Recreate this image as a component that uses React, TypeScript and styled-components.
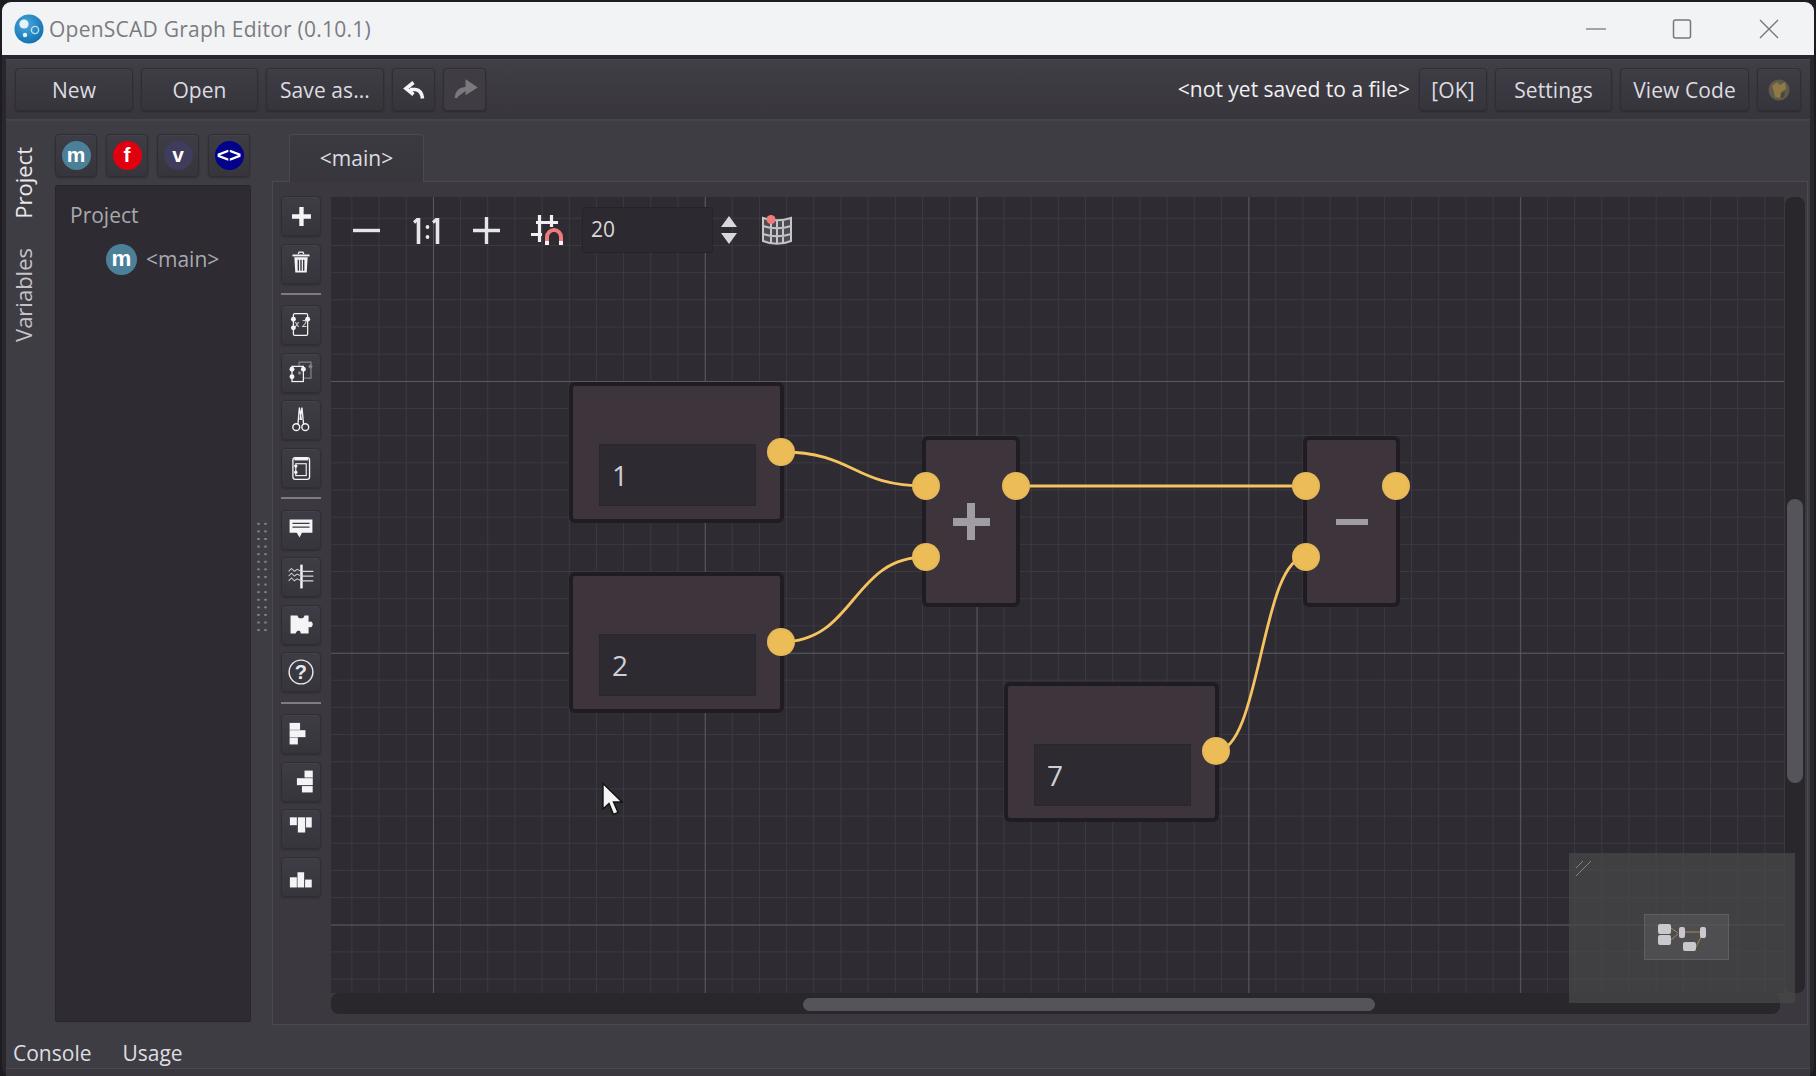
import React from "react";
import styled, { createGlobalStyle } from "styled-components";

const Global = createGlobalStyle`
  html, body { margin: 0; padding: 0; background: #1d1c20; overflow: hidden; }
  * { box-sizing: border-box; }
`;

const Root = styled.div`
  width: 1816px; height: 1076px; padding: 2px 2px 0 2px;
  display: flex; flex-direction: column;
  background: #1d1c20;
  font-family: "Open Sans", "Noto Sans", sans-serif;
  font-size: 21px; color: #e2e2e6; overflow: hidden;
`;
const TitleBar = styled.div`
  height: 53px; flex: none; display: flex; align-items: center;
  background: #f2f3f5; border-radius: 9px 9px 0 0; padding-left: 12px; color: #7b7b80;
`;
const TitleText = styled.span`
  margin-left: 5px; font-size: 21px; letter-spacing: 0.24px; flex: 1;
`;
const WinButtons = styled.div`
  display: flex; width: 262px; height: 100%; position: relative; justify-content: flex-end;
`;
const WinBtn = styled.div<{ $w: number }>`
  width: ${p => p.$w}px; height: 100%; display: flex; align-items: center; justify-content: center;
`;
const Frame = styled.div`
  flex: 1; min-height: 0; display: flex; flex-direction: column;
  background: #29272d; padding: 4px 4px 0 4px; border-radius: 0 0 9px 9px;
`;
const Toolbar = styled.div`
  height: 62px; flex: none; display: flex; align-items: flex-start; gap: 8px;
  padding: 8px 9px 0 9px; background: linear-gradient(#403e46, #38353c);
  border-bottom: 2px solid #45434b; border-top: 1px solid #4a4850;
`;
const Btn = styled.div<{ $w: number; $dim?: boolean }>`
  width: ${p => p.$w}px; height: 43px; flex: none;
  display: flex; align-items: center; justify-content: center;
  background: ${p => (p.$dim ? "#3f3d43" : "linear-gradient(#3e3c44, #37353c)")};
  border: 1px solid #302e35; border-radius: 4px;
  box-shadow: 0 1px 2px rgba(0,0,0,.25), inset 0 1px 0 rgba(255,255,255,.03);
  color: #dcdce0; white-space: nowrap; letter-spacing: 0.08px;
`;
const Spacer = styled.div`flex: 1;`;
const FileName = styled.div`
  height: 43px; line-height: 43px; color: #f0f0f2; margin-right: 1px; white-space: nowrap; letter-spacing: 0;
`;
const MainRow = styled.div`
  flex: none; height: 904px; display: flex; padding-top: 13px; background: #3f3d44;
`;
const VTabs = styled.div`
  width: 49px; flex: none; display: flex; flex-direction: column; align-items: flex-start; gap: 29px; padding: 13px 0 0 6px;
`;
const VTab = styled.div<{ $active?: boolean }>`
  writing-mode: vertical-rl; transform: rotate(180deg);
  color: ${p => (p.$active ? "#e8e8ea" : "#c4c4c8")}; font-size: 22px; line-height: 22px;
`;
const LeftCol = styled.div`
  width: 196px; flex: none; display: flex; flex-direction: column; gap: 8px; padding-bottom: 3px;
`;
const IconRow = styled.div`display: flex; gap: 9px;`;
const IconBtn = styled(Btn)`width: 42px;`;
const Bubble = styled.div<{ $bg: string; $size?: number }>`
  width: ${p => p.$size ?? 29}px; height: ${p => p.$size ?? 29}px; border-radius: 50%; background: ${p => p.$bg};
  display: flex; align-items: center; justify-content: center;
  color: #fff; font-family: "Liberation Sans", sans-serif; font-weight: 700; font-size: ${p => (p.$size ?? 29) * 0.72}px; line-height: 1;
`;
const ProjectPanel = styled.div`
  flex: 1; background: #2e2b33; border: 1px solid #28262c; border-radius: 2px; padding: 12px 0 0 14px; color: #a9a9ae;
`;
const PanelTitle = styled.div`line-height: 34px;`;
const TreeItem = styled.div`display: flex; align-items: center; gap: 9px; margin: 11px 0 0 36px; line-height: 32px;`;
const Splitter = styled.div`
  width: 21px; flex: none; position: relative;
`;
const Grip = styled.div`
  position: absolute; left: 4px; top: 386px; width: 14px; height: 116px;
  background-image: radial-gradient(circle, #85848a 1px, transparent 1.4px);
  background-size: 7px 7.6px;
`;
const RightCol = styled.div`
  flex: 1; display: flex; flex-direction: column; min-width: 0; padding-right: 2px;
`;
const TabStrip = styled.div`height: 47px; flex: none; padding-left: 17px; display: flex;`;
const Tab = styled.div`
  width: 135px; height: 48px; background: linear-gradient(#3c3a41, #38363d); padding-bottom: 2px;
  border: 1px solid #4a4850; border-bottom: none; border-radius: 4px 4px 0 0;
  display: flex; align-items: center; justify-content: center; color: #dcdce0; z-index: 1;
`;
const Pane = styled.div`
  height: 844px; flex: none; display: flex; border: 1px solid #4b4951; padding: 15px 2px 10px 8px; background: #3b393f;
`;
const SideBar = styled.div`
  width: 40px; flex: none; display: flex; flex-direction: column; gap: 7.5px; margin: -1px 10px 0 0;
`;
const SideBtn = styled(Btn)`width: 40px; height: 40px;`;
const Sep = styled.div`height: 2px; background: #7d7c82; margin: 1.6px 0 3.4px;`;
const CanvasCol = styled.div`flex: 1; min-width: 0; display: flex; flex-direction: column; position: relative;`;
const CanvasRow = styled.div`flex: none; height: 796px; display: flex;`;
const Canvas = styled.div`
  position: relative; flex: 1; overflow: hidden;
  background-color: #2e2b33;
  background-image:
    linear-gradient(to right, #5a585f 1px, transparent 1px),
    linear-gradient(to bottom, #5a585f 1px, transparent 1px),
    linear-gradient(to right, #3c3a41 1px, transparent 1px),
    linear-gradient(to bottom, #3c3a41 1px, transparent 1px);
  background-size: 271.8px 271.8px, 271.8px 271.8px, 27.18px 27.18px, 27.18px 27.18px;
  background-position: 102px 0, 0 184px, 20.4px 0, 0 20.8px;
`;
const VTrack = styled.div`
  width: 20px; flex: none; margin-left: 1px; background: #29272c; border-radius: 8px; position: relative; padding: 302px 2px 0;
`;
const VThumb = styled.div`height: 284px; background: #55545b; border-radius: 8px;`;
const HTrack = styled.div`
  flex: none; height: 21px; margin-right: 25px; background: #29272c; border-radius: 8px; padding: 5px 0 3px 472px;
`;
const HThumb = styled.div`width: 572px; height: 13px; background: #55545b; border-radius: 7px;`;

const CanvasTools = styled.div`
  position: absolute; left: 20px; top: 10px; height: 46px; display: flex; align-items: center; z-index: 3;
`;
const ToolIcon = styled.div<{ $w: number; $ml: number }>`
  width: ${p => p.$w}px; margin-left: ${p => p.$ml}px; height: 46px; display: flex; align-items: center; justify-content: center; flex: none;
`;
const GridField = styled.div`
  width: 131px; height: 46px; background: #2c2930; border: 1px solid #26242a; border-radius: 3px;
  padding-left: 8px; line-height: 42px; color: #d8d8dc; font-size: 21px; margin-left: 19px;
`;
const Wires = styled.svg`position: absolute; left: 0; top: 0; width: 100%; height: 100%; z-index: 2; pointer-events: none;`;
const Node = styled.div<{ $x: number; $y: number; $w: number; $h: number }>`
  position: absolute; left: ${p => p.$x}px; top: ${p => p.$y}px; width: ${p => p.$w}px; height: ${p => p.$h}px;
  background: #3e353c; border: 4px solid #1f1c23; border-radius: 6px; z-index: 1;
  display: flex; align-items: center; justify-content: center;
`;
const ValueField = styled.div`
  position: absolute; left: 26px; top: 58px; width: 157px; height: 62px;
  background: #2d2a32; border: 1px solid #29262d;
  padding-left: 12px; line-height: 61px; font-size: 28px; color: #cfcfd4;
`;
const OpSign = styled.div<{ $plus?: boolean }>`
  position: relative; width: ${p => (p.$plus ? 37 : 32)}px; height: ${p => (p.$plus ? 37 : 6)}px;
  background: ${p => p.$plus
    ? "linear-gradient(#a09ca6,#a09ca6) center/100% 8px no-repeat, linear-gradient(#a09ca6,#a09ca6) center/8px 100% no-repeat"
    : "#a09ca6"};
`;
const Port = styled.div<{ $x: number; $y: number }>`
  position: absolute; left: ${p => p.$x - 14}px; top: ${p => p.$y - 14}px; width: 28px; height: 28px; border-radius: 50%;
  background: radial-gradient(circle, #ecbc56 0 55%, #dfb45a 80%, #c9a45a 100%); z-index: 3;
`;
const Cursor = styled.svg`position: absolute; left: 270px; top: 585px; width: 24px; height: 36px; z-index: 5;`;
const Minimap = styled.div`
  position: absolute; left: 1238px; top: 656px; width: 226px; height: 150px; z-index: 4;
  background: rgba(72,72,72,.72);
`;
const MiniView = styled.div`
  position: absolute; left: 75px; top: 61px; width: 85px; height: 46px;
  background: rgba(100,100,105,.4); border: 1px solid #5f5e63;
`;
const MiniResize = styled.svg`position: absolute; left: 7px; top: 8px; width: 15px; height: 15px;`;
const BottomBar = styled.div`
  flex: 1; min-height: 0; display: flex; align-items: flex-start; gap: 31px; padding: 11px 0 0 7px; background: #3f3d44; color: #dedee2; line-height: 34px;
`;
const BottomEdge = styled.div`height: 8px; flex: none; background: #3a383e; border-top: 1px solid #4a4850;`;

const W = "#f4f4f6";
const SvgBox = (p: React.PropsWithChildren<{ w?: number; h?: number; vb?: string }>) => (
  <svg width={p.w ?? 40} height={p.h ?? 40} viewBox={p.vb ?? `0 0 ${p.w ?? 40} ${p.h ?? 40}`} fill="none">{p.children}</svg>
);

const Rects = ({ r }: { r: number[][] }) => (
  <SvgBox>{r.map((a, i) => <rect key={i} x={a[0]} y={a[1]} width={a[2]} height={a[3]} fill={W} />)}</SvgBox>
);

const Dots = ({ d }: { d: number[][] }) => <>{d.map((a, i) => <circle key={i} cx={a[0]} cy={a[1]} r={2.6} fill={W} />)}</>;

const sideIcons: Record<string, React.ReactNode> = {
  plus: <SvgBox><path d="M20.5 10.5V30.5M10.5 20.5H30.5" stroke={W} strokeWidth={4.6} /></SvgBox>,
  trash: (
    <SvgBox>
      <path d="M17 9.5l1-2h4l1 2" stroke={W} strokeWidth={1.4} />
      <path d="M11 11h18" stroke={W} strokeWidth={2} />
      <path d="M13 13h14l-1 16H14z" fill={W} />
      <path d="M17.2 15.5V27M20 15.5V27M22.8 15.5V27" stroke="#3a3840" strokeWidth={1.5} />
    </SvgBox>
  ),
  dup: (
    <SvgBox>
      <rect x={12} y={8} width={15} height={23} rx={1.5} stroke={W} strokeWidth={1.3} />
      <Dots d={[[12, 14], [12, 23], [27, 14]]} />
      <text x={19.8} y={22} fontSize={9.5} fill={W} textAnchor="middle" fontFamily="Open Sans">x 2</text>
    </SvgBox>
  ),
  copy: (
    <SvgBox>
      <path d="M18 12V8.5h12.5V25.5H23" stroke="#85848a" strokeWidth={1.3} />
      <circle cx={30} cy={13} r={2} fill="#85848a" />
      <circle cx={18.5} cy={20} r={1.8} fill="#85848a" />
      <rect x={10.5} y={13} width={12} height={16} stroke={W} strokeWidth={1.3} />
      <Dots d={[[10.5, 16], [10.5, 24], [22.5, 16]]} />
    </SvgBox>
  ),
  cut: (
    <SvgBox>
      <circle cx={15} cy={27.5} r={3.6} stroke={W} strokeWidth={1.5} />
      <circle cx={24.5} cy={27.5} r={3.6} stroke={W} strokeWidth={1.5} />
      <path d="M16.8 24.5L18.300 7 20.500 20M22.7 24.5L21 7 19 20" stroke={W} strokeWidth={1.4} />
    </SvgBox>
  ),
  paste: (
    <SvgBox>
      <rect x={11.5} y={9} width={17.5} height={23} rx={2.5} stroke={W} strokeWidth={1.4} />
      <path d="M13 9h14.5v3H13z" fill={W} />
      <rect x={14.5} y={15.5} width={11} height={12.5} stroke={W} strokeWidth={1.2} />
      <circle cx={14.5} cy={18} r={1.8} fill={W} />
      <circle cx={14.5} cy={24.5} r={1.8} fill={W} />
    </SvgBox>
  ),
  comment: (
    <SvgBox>
      <path d="M8 9h24v14H21l-2.5 5-3-5H8z" fill={W} />
      <path d="M11 13h18M11 17h18" stroke="#3a3840" strokeWidth={1.5} />
    </SvgBox>
  ),
  wire: (
    <SvgBox>
      <path d="M20.5 7V32" stroke={W} strokeWidth={2.6} />
      <path d="M20 14H33M20 19H33M20 24H33" stroke="#d8d8dc" strokeWidth={1.4} />
      <path d="M7 14l3-3 3 3 3-2 4 2M7 19l3-3 3 3 3-2 4 2M7 24l3-3 3 3 3-2 4 2" stroke="#c8c8cc" strokeWidth={1.1} />
    </SvgBox>
  ),
  puzzle: (
    <SvgBox>
      <path d="M9 10h7c1 0 .2 3 4 3s3-3 4-3h4v6.5c0 .8 1.5-.8 3 .2 2 1.4 1.8 4.2 0 5.3-1.5.8-3-.6-3 .3V29H20c-1 0 .5-3-2.500-3S15 29 14 29H9z" fill={W} />
    </SvgBox>
  ),
  help: (
    <SvgBox>
      <circle cx={20} cy={20} r={12.5} stroke="#e8e8ea" strokeWidth={1.5} />
      <text x={20} y={27} fontSize={21} fontWeight={700} fill="#e8e8ea" textAnchor="middle" fontFamily="Liberation Sans">?</text>
    </SvgBox>
  ),
  al: <Rects r={[[8, 8.3, 11, 7.3], [8, 16, 16.7, 7.3], [8, 23.7, 8.7, 7.3]]} />,
  ar: <Rects r={[[23.7, 8, 8.7, 7.3], [15.7, 16, 16.7, 7.3], [21, 24.3, 11.3, 6.7]]} />,
  at: <Rects r={[[8.3, 7.7, 7.3, 8.3], [16.7, 7.7, 7.7, 16], [25.3, 7.7, 6, 10.7]]} />,
  ab: <Rects r={[[8.3, 20.3, 7.3, 10.7], [16.3, 15, 7, 16], [24.3, 22.7, 7, 8.3]]} />,
};

const SideButton = ({ k }: { k: string }) => <SideBtn $w={40}>{sideIcons[k]}</SideBtn>;

const nodes = [
  { x: 238, y: 185, w: 215, h: 141, v: "1" },
  { x: 238, y: 375, w: 215, h: 141, v: "2" },
  { x: 673, y: 485, w: 215, h: 140, v: "7" },
];
const ports = [[450, 255], [450, 445], [595, 289], [595, 360], [685, 289], [975, 289], [975, 360], [1065, 289], [885, 554]];
const wires = [
  "M450 255C525 255 520 289 595 289",
  "M450 445C525 445 520 360 595 360",
  "M685 289H975",
  "M885 554C930 554 930 360 975 360",
];

const Logo = () => (
  <svg width={30} height={30} viewBox="0 0 30 30">
    <defs>
      <radialGradient id="lg" cx="40%" cy="35%" r="70%">
        <stop offset="0" stopColor="#4aa8dc" />
        <stop offset="1" stopColor="#0f6fae" />
      </radialGradient>
    </defs>
    <circle cx={15} cy={15} r={14.5} fill="url(#lg)" />
    <circle cx={10} cy={10} r={4.6} fill="#e6f3fb" />
    <circle cx={21} cy={16} r={3.6} fill="none" stroke="#bfe0f2" strokeWidth={1.4} />
    <circle cx={11} cy={21} r={2.2} fill="#e6f3fb" />
  </svg>
);

export default function App() {
  return (
    <Root>
      <Global />
      <TitleBar>
        <Logo />
        <TitleText>OpenSCAD Graph Editor (0.10.1)</TitleText>
        <WinButtons>
          <WinBtn $w={88}><SvgBox w={20} h={20}><path d="M0 10H20" stroke="#8a8a8e" strokeWidth={1.5} /></SvgBox></WinBtn>
          <WinBtn $w={84}><SvgBox w={20} h={20}><rect x={1.500} y={1} width={17} height={18} rx={2} stroke="#77777b" strokeWidth={1.5} /></SvgBox></WinBtn>
          <WinBtn $w={90}><SvgBox w={20} h={20}><path d="M1 1L19 19M19 1L1 19" stroke="#77777b" strokeWidth={1.4} /></SvgBox></WinBtn>
        </WinButtons>
      </TitleBar>
      <Frame>
        <Toolbar>
          <Btn $w={118}>New</Btn>
          <Btn $w={117}>Open</Btn>
          <Btn $w={118}>Save as...</Btn>
          <Btn $w={43}>
            <SvgBox w={26} h={26}><path d="M21.500 21.500c-.5-5-3-8.500-7-9H9M12.500 5.500L5 11.500l7.500 6" stroke={W} strokeWidth={3.6} /></SvgBox>
          </Btn>
          <Btn $w={43} $dim>
            <SvgBox w={26} h={26}><path d="M4 21c.5-6 4-9 9-9.500h4M15 5l8 5.500-8 5z" stroke="#7a797e" strokeWidth={3} fill="#7a797e" /></SvgBox>
          </Btn>
          <Spacer />
          <FileName>&lt;not yet saved to a file&gt;</FileName>
          <Btn $w={68}>[OK]</Btn>
          <Btn $w={117}>Settings</Btn>
          <Btn $w={129}>View Code</Btn>
          <Btn $w={44}>
            <SvgBox w={26} h={26}>
              <circle cx={13} cy={13} r={10.500} fill="#5f5a4c" />
              <path d="M6 9l5-4 3 3 5-3 1 7-5 3-1 6-5-1-1-5z" fill="#8f7a45" />
              <path d="M15 16l4-1-1 5-3 1z" fill="#4a473e" />
            </SvgBox>
          </Btn>
        </Toolbar>
        <MainRow>
          <VTabs>
            <VTab $active>Project</VTab>
            <VTab>Variables</VTab>
          </VTabs>
          <LeftCol>
            <IconRow>
              <IconBtn $w={42}><Bubble $bg="#4c7f98">m</Bubble></IconBtn>
              <IconBtn $w={42}><Bubble $bg="#e1000f">f</Bubble></IconBtn>
              <IconBtn $w={42}><Bubble $bg="#3f3c5c">v</Bubble></IconBtn>
              <IconBtn $w={42}><Bubble $bg="#02028a">&lt;&gt;</Bubble></IconBtn>
            </IconRow>
            <ProjectPanel>
              <PanelTitle>Project</PanelTitle>
              <TreeItem><Bubble $bg="#4c7f98" $size={31}>m</Bubble>&lt;main&gt;</TreeItem>
            </ProjectPanel>
          </LeftCol>
          <Splitter><Grip /></Splitter>
          <RightCol>
            <TabStrip><Tab>&lt;main&gt;</Tab></TabStrip>
            <Pane>
              <SideBar>
                <SideButton k="plus" />
                <SideButton k="trash" />
                <Sep />
                <SideButton k="dup" />
                <SideButton k="copy" />
                <SideButton k="cut" />
                <SideButton k="paste" />
                <Sep />
                <SideButton k="comment" />
                <SideButton k="wire" />
                <SideButton k="puzzle" />
                <SideButton k="help" />
                <Sep />
                <SideButton k="al" />
                <SideButton k="ar" />
                <SideButton k="at" />
                <SideButton k="ab" />
              </SideBar>
              <CanvasCol>
                <CanvasRow>
                  <Canvas>
                    <CanvasTools>
                      <ToolIcon $w={30} $ml={0}><SvgBox w={30} h={30}><path d="M2 15.500H29" stroke="#e6e6ea" strokeWidth={3.4} /></SvgBox></ToolIcon>
                      <ToolIcon $w={30} $ml={30}>
                        <SvgBox w={30} h={30}>
                          <path d="M7.500 3V29M26.500 3V29" stroke="#e6e6ea" strokeWidth={3.6} />
                          <path d="M3 7.500l4-3.500M22 7.500l4-3.500" stroke="#e6e6ea" strokeWidth={3} />
                          <circle cx={16.500} cy={12} r={1.9} fill="#e6e6ea" />
                          <circle cx={16.500} cy={22} r={1.9} fill="#e6e6ea" />
                        </SvgBox>
                      </ToolIcon>
                      <ToolIcon $w={30} $ml={30}><SvgBox w={30} h={30}><path d="M2 15.500H29M15.500 2V29" stroke="#e6e6ea" strokeWidth={3.4} /></SvgBox></ToolIcon>
                      <ToolIcon $w={32} $ml={30}>
                        <SvgBox w={32} h={32}>
                          <path d="M5 8.500H27M0 20.500H11M8.500 1V28M20.500 1V13" stroke="#f0f0f2" strokeWidth={3.2} />
                          <path d="M16 28V23a7 7 0 0 1 14 0V28" stroke="#ef7b7b" strokeWidth={4} />
                          <path d="M16 31V27M30 31V27" stroke="#f4f4f6" strokeWidth={4} />
                        </SvgBox>
                      </ToolIcon>
                      <GridField>20</GridField>
                      <ToolIcon $w={16} $ml={8}>
                        <SvgBox w={16} h={28}>
                          <path d="M8 0L16 11H0zM0 17H16L8 28z" fill="#d8d8dc" />
                        </SvgBox>
                      </ToolIcon>
                      <ToolIcon $w={32} $ml={24}>
                        <SvgBox w={32} h={32}>
                          <path d="M2 4c9 3 19 3 28 0v23c-8 3.500-20 3.500-28 0z" fill="#4d4c52" />
                          <path d="M2 4c9 3 19 3 28 0v23c-8 3.500-20 3.500-28 0zM2 12c9 3 19 3 28 0M2 20c9 3 19 3 28 0M10 6v23M16 7v23M22 6v23" stroke="#c4c4c9" strokeWidth={2} />
                          <circle cx={10} cy={5.500} r={4.500} fill="#ef7b7b" />
                        </SvgBox>
                      </ToolIcon>
                    </CanvasTools>
                    {nodes.map(n => (
                      <Node key={n.v} $x={n.x} $y={n.y} $w={n.w} $h={n.h}>
                        <ValueField>{n.v}</ValueField>
                      </Node>
                    ))}
                    <Node $x={591} $y={239} $w={98} $h={171}><OpSign $plus /></Node>
                    <Node $x={972} $y={239} $w={97} $h={171}><OpSign /></Node>
                    <Wires>
                      {wires.map(d => <path key={d} d={d} fill="none" stroke="#f5c35f" strokeWidth={2.8} />)}
                    </Wires>
                    {ports.map(p => <Port key={p.join()} $x={p[0]} $y={p[1]} />)}
                    <Cursor viewBox="0 0 24 36">
                      <path d="M2 1.500V27l6-5.500 4.500 11 4.500-2-4.500-10.500H21z" fill="#f4f4f4" stroke="#111" strokeWidth={1.4} />
                    </Cursor>
                  </Canvas>
                  <VTrack><VThumb /></VTrack>
                </CanvasRow>
                <HTrack><HThumb /></HTrack>
                <Minimap>
                  <MiniResize viewBox="0 0 15 15"><path d="M0 7L7 0M0 15L15 0" stroke="#85848a" strokeWidth={1} /></MiniResize>
                  <MiniView>
                    <svg width={83} height={44} viewBox="0 0 83 44">
                      <path d="M26 13l7 5M26 25l7-6M40 17H56M50 34l8-16" stroke="#a68a52" strokeWidth={1} fill="none" />
                      <rect x={13} y={9} width={13} height={10} rx={2} fill="#c9c8cc" />
                      <rect x={13} y={20} width={13} height={10} rx={2} fill="#c9c8cc" />
                      <rect x={34} y={12} width={6} height={11} rx={2} fill="#c9c8cc" />
                      <rect x={55} y={12} width={6} height={11} rx={2} fill="#c9c8cc" />
                      <rect x={38} y={27} width={13} height={9} rx={2} fill="#c9c8cc" />
                    </svg>
                  </MiniView>
                </Minimap>
              </CanvasCol>
            </Pane>
          </RightCol>
        </MainRow>
        <BottomBar>
          <span>Console</span>
          <span>Usage</span>
        </BottomBar>
        <BottomEdge />
      </Frame>
    </Root>
  );
}
